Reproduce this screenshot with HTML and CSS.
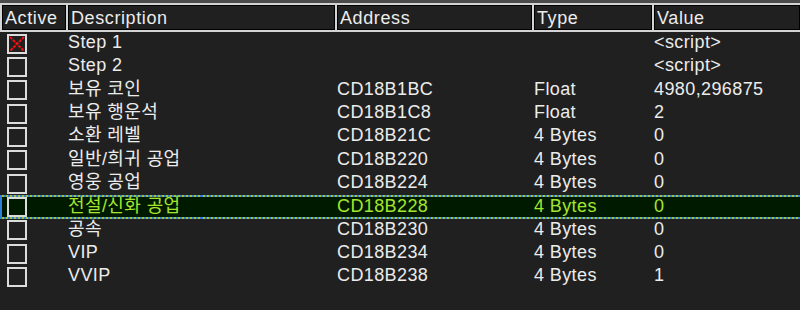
FILE: index.html
```html
<!DOCTYPE html>
<html>
<head>
  <title>Cheat Table</title>
  <link rel="stylesheet" href="styles.css">
</head>
<body>
  <div class="top-strip"></div>
  <div class="table-header">
    <div class="head-cell">Active</div>
    <div class="head-cell">Description</div>
    <div class="head-cell">Address</div>
    <div class="head-cell">Type</div>
    <div class="head-cell">Value</div>
  </div>
  <div class="table-body">
    <div class="entry">
      <div class="active-cell">
        <svg class="checkbox" width="20" height="20" viewBox="0 0 20 20">
          <rect x="1" y="1" width="18" height="18" fill="none" stroke="#dcdcdc" stroke-width="2"/>
          <path d="M3 3 L17 17 M17 3 L3 17" stroke="#f01010" stroke-width="2" stroke-dasharray="3 1"/>
        </svg>
      </div>
      <div class="cell">Step 1</div>
      <div class="cell"></div>
      <div class="cell"></div>
      <div class="cell">&lt;script&gt;</div>
    </div>
    <div class="entry">
      <div class="active-cell"><span class="box"></span></div>
      <div class="cell">Step 2</div>
      <div class="cell"></div>
      <div class="cell"></div>
      <div class="cell">&lt;script&gt;</div>
    </div>
    <div class="entry">
      <div class="active-cell"><span class="box"></span></div>
      <div class="cell">보유 코인</div>
      <div class="cell">CD18B1BC</div>
      <div class="cell">Float</div>
      <div class="cell">4980,296875</div>
    </div>
    <div class="entry">
      <div class="active-cell"><span class="box"></span></div>
      <div class="cell">보유 행운석</div>
      <div class="cell">CD18B1C8</div>
      <div class="cell">Float</div>
      <div class="cell">2</div>
    </div>
    <div class="entry">
      <div class="active-cell"><span class="box"></span></div>
      <div class="cell">소환 레벨</div>
      <div class="cell">CD18B21C</div>
      <div class="cell">4 Bytes</div>
      <div class="cell">0</div>
    </div>
    <div class="entry">
      <div class="active-cell"><span class="box"></span></div>
      <div class="cell">일반/희귀 공업</div>
      <div class="cell">CD18B220</div>
      <div class="cell">4 Bytes</div>
      <div class="cell">0</div>
    </div>
    <div class="entry">
      <div class="active-cell"><span class="box"></span></div>
      <div class="cell">영웅 공업</div>
      <div class="cell">CD18B224</div>
      <div class="cell">4 Bytes</div>
      <div class="cell">0</div>
    </div>
    <div class="entry selected">
      <div class="active-cell"><span class="box"></span></div>
      <div class="cell">전설/신화 공업</div>
      <div class="cell">CD18B228</div>
      <div class="cell">4 Bytes</div>
      <div class="cell">0</div>
    </div>
    <div class="entry">
      <div class="active-cell"><span class="box"></span></div>
      <div class="cell">공속</div>
      <div class="cell">CD18B230</div>
      <div class="cell">4 Bytes</div>
      <div class="cell">0</div>
    </div>
    <div class="entry">
      <div class="active-cell"><span class="box"></span></div>
      <div class="cell">VIP</div>
      <div class="cell">CD18B234</div>
      <div class="cell">4 Bytes</div>
      <div class="cell">0</div>
    </div>
    <div class="entry">
      <div class="active-cell"><span class="box"></span></div>
      <div class="cell">VVIP</div>
      <div class="cell">CD18B238</div>
      <div class="cell">4 Bytes</div>
      <div class="cell">1</div>
    </div>
  </div>
</body>
</html>
```

FILE: styles.css
```css
/* Page */
body {
  margin: 0;
  background-color: #202020;
  color: #ececec;
  font-family: "Liberation Sans", "Noto Sans CJK KR", sans-serif;
  font-size: 18px;
  overflow: hidden;
}

.top-strip {
  height: 3px;
  background-color: #4b4b4b;
}

/* Header row */
.table-header {
  display: grid;
  grid-template-columns: 66px 269px 197px 120px 1fr;
  height: 25px;
  border-top: 2px solid #d4d4d4;
  border-bottom: 2px solid #d4d4d4;
}

.head-cell {
  border-left: 2px solid #d4d4d4;
  box-shadow: inset 0 0 0 1px #000;
  padding: 1px 0 0 3px;
  line-height: 24px;
  letter-spacing: 0.6px;
  white-space: nowrap;
  overflow: hidden;
}

/* Entries */
.table-body {
  display: flex;
  flex-direction: column;
}

.entry {
  display: grid;
  grid-template-columns: 66px 269px 197px 120px 1fr;
  height: 23.33px;
  box-sizing: border-box;
}

.cell {
  padding-left: 2px;
  line-height: 20px;
  letter-spacing: 0.4px;
  white-space: nowrap;
}

.active-cell {
  display: flex;
  align-items: center;
  padding-left: 7px;
}

.box {
  width: 16px;
  height: 16px;
  border: 2px solid #dcdcdc;
}

.checkbox {
  display: block;
}

/* Selected entry */
.entry.selected {
  grid-template-columns: 64px 269px 197px 120px 1fr;
  background-color: #001a00;
  color: #a4e62e;
  border-top: 2px solid;
  border-bottom: 2px solid;
  border-left: 2px solid;
  border-image: repeating-linear-gradient(90deg, #2f7fe0 0 2px, #a8c42c 2px 4px) 2;
}

.entry.selected .active-cell {
  padding-left: 5px;
}

.entry.selected .cell {
  margin-top: -1px;
}
```
